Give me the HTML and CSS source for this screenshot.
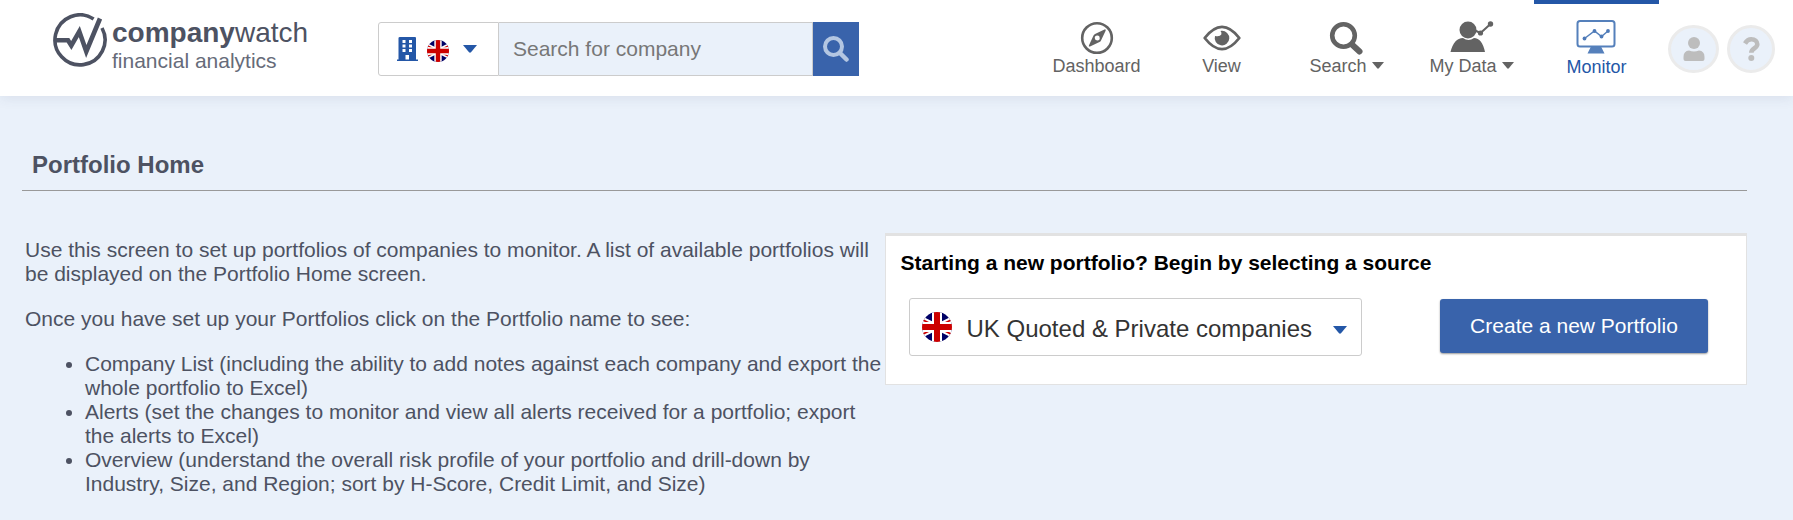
FILE: index.html
```html
<!DOCTYPE html>
<html lang="en">
<head>
<meta charset="utf-8">
<meta name="viewport" content="width=device-width, initial-scale=1">
<title>Portfolio Home</title>
<link rel="stylesheet" href="styles.css">
</head>
<body>
<svg class="defs" width="0" height="0" aria-hidden="true">
  <defs>
    <clipPath id="disc"><circle cx="15" cy="15" r="15"/></clipPath>
    <symbol id="flag" viewBox="0 0 30 30">
      <g clip-path="url(#disc)">
        <rect width="30" height="30" fill="#006"/>
        <path d="M-15 0 45 30M-15 30 45 0" stroke="#fff" stroke-width="6"/>
        <path d="M-15 0 45 30M-15 30 45 0" stroke="#c00" stroke-width="2"/>
        <path d="M15 0V30M0 15H30" stroke="#fff" stroke-width="10"/>
        <path d="M15 0V30M0 15H30" stroke="#c00" stroke-width="6"/>
      </g>
    </symbol>
    <symbol id="caret" viewBox="0 0 14 8"><path d="M0 0H14L8 7.3Q7 8.2 6 7.3Z" fill="currentColor"/></symbol>
  </defs>
</svg>

<header class="topbar">
  <a class="logo" href="#">
    <svg class="logo-mark" viewBox="0 0 56 56" aria-hidden="true">
      <path d="M41.600 5.900A25 25 0 1 0 50 15" fill="none" stroke="#4d5262" stroke-width="3.600"/>
      <path d="M3 27.300H16L19.300 32.500L27.300 18.500L34.300 38.500L48 5.500" fill="none" stroke="#4d5262" stroke-width="4.600"/>
    </svg>
    <span class="logo-text">
      <span class="logo-name"><b>company</b>watch</span>
      <span class="logo-tag">financial analytics</span>
    </span>
  </a>

  <form class="search">
    <button class="country" type="button" aria-label="Company search country">
      <svg class="building" viewBox="0 0 21 24" aria-hidden="true">
        <path fill="#2457a7" fill-rule="evenodd" d="M3 0H18Q19 0 19 1V22.500H21V24H0V22.500H1.500V1Q1.500 0 3 0ZM5.500 3V6H8.500V3ZM12 3V6H15V3ZM5.500 7.500V10.500H8.500V7.500ZM12 7.500V10.500H15V7.500ZM5.500 12V15H8.500V12ZM12 12V15H15V12ZM8.500 18V22.500H12V18Z"/>
      </svg>
      <svg class="flag-small" aria-hidden="true"><use href="#flag"/></svg>
      <svg class="caret" aria-hidden="true"><use href="#caret"/></svg>
    </button>
    <input class="search-input" type="text" placeholder="Search for company" aria-label="Search for company">
    <button class="search-button" type="submit" aria-label="Search">
      <svg class="search-icon" viewBox="0 0 26 26" fill="none" stroke="currentColor" aria-hidden="true">
        <circle cx="10.500" cy="10.500" r="8.500" stroke-width="4"/><path d="M17 17L23.500 23.500" stroke-width="4.500" stroke-linecap="round"/>
      </svg>
    </button>
  </form>

  <nav class="nav">
    <a class="nav-item" href="#">
      <svg class="nav-icon" viewBox="0 0 44 34" aria-hidden="true">
        <circle cx="22" cy="17" r="14.800" fill="none" stroke="#636363" stroke-width="2.600"/>
        <path fill="#636363" fill-rule="evenodd" d="M30.500 8.500Q31 9 30.500 10L26 19.500Q25.500 20.500 24.500 21L15 25.500Q13.200 26 14 24.200L18.500 14.500Q19 13.500 20 13L29.500 8.500Q30.200 8.200 30.500 8.500ZM22.200 14.500A2.500 2.500 0 1 0 22.300 19.500A2.500 2.500 0 1 0 22.200 14.500Z"/>
      </svg>
      <span>Dashboard</span>
    </a>
    <a class="nav-item" href="#">
      <svg class="nav-icon" viewBox="0 0 44 34" aria-hidden="true">
        <path d="M4.700 17Q22-5.200 39.300 17Q22 39.200 4.700 17Z" fill="none" stroke="#636363" stroke-width="2.800" stroke-linejoin="round"/>
        <path d="M21.500 9.800A7.300 7.300 0 1 1 15 15Q20 16 21.300 13.500Q22 11.800 20.500 10Z" fill="#636363"/>
      </svg>
      <span>View</span>
    </a>
    <a class="nav-item" href="#">
      <svg class="nav-icon" viewBox="0 0 44 34" fill="none" stroke="#636363" aria-hidden="true">
        <circle cx="18.500" cy="14.500" r="11.300" stroke-width="4.600"/><path d="M27.500 24L34.500 30.500" stroke-width="6" stroke-linecap="round"/>
      </svg>
      <span>Search <svg class="nav-caret" aria-hidden="true"><use href="#caret"/></svg></span>
    </a>
    <a class="nav-item" href="#">
      <svg class="nav-icon" viewBox="0 0 44 34" aria-hidden="true">
        <path d="M.5 31Q4 17 13 17Q18.500 21 24 17Q32 17 35 31Z" fill="#636363"/>
        <circle cx="18" cy="9" r="8.500" fill="#636363"/>
        <path d="M25 9.500L30.500 12L40.500 3" fill="none" stroke="#636363" stroke-width="2"/>
        <circle cx="30.500" cy="12" r="2.600" fill="#636363"/><circle cx="40.500" cy="3" r="2.700" fill="#636363"/>
      </svg>
      <span>My Data <svg class="nav-caret" aria-hidden="true"><use href="#caret"/></svg></span>
    </a>
    <a class="nav-item active" href="#" aria-current="page">
      <svg class="nav-icon" viewBox="0 0 44 34" aria-hidden="true">
        <rect x="2.500" y="1" width="37" height="25.500" rx="2.500" fill="none" stroke="#5580bb" stroke-width="2"/>
        <path d="M16 26.500H26L29.500 33.500H12.500Z" fill="#5580bb"/>
        <path d="M9.500 18.500L19.500 11L26.500 16.500L33 11" fill="none" stroke="#5580bb" stroke-width="1.500"/>
        <g fill="#4d79b7"><circle cx="9.500" cy="18.500" r="1.900"/><circle cx="19.500" cy="11" r="1.900"/><circle cx="26.500" cy="16.500" r="1.900"/><circle cx="33" cy="11" r="1.900"/></g>
      </svg>
      <span>Monitor</span>
    </a>
  </nav>

  <div class="account">
    <button class="round user" type="button" aria-label="Account">
      <svg class="round-icon" viewBox="0 0 22 24" fill="#bdbdbd" aria-hidden="true"><circle cx="11" cy="6" r="6"/><path d="M6 13.500Q11 15.500 16 13.500Q21.500 14 21.500 20V22Q21.500 24 19.500 24H2.500Q.5 24 .5 22V20Q.5 14 6 13.500Z"/></svg>
    </button>
    <button class="round" type="button" aria-label="Help">
      <svg class="round-icon" viewBox="0 0 22 24" aria-hidden="true"><path d="M5 6.500Q7.500 2.300 11.300 2.300C15 2.300 17.300 4.500 17.300 7.300C17.300 11.500 11.300 11 11.300 15.800" fill="none" stroke="#bdbdbd" stroke-width="4.600"/><circle cx="11.300" cy="21" r="3" fill="#bdbdbd"/></svg>
    </button>
  </div>
</header>

<main class="page">
  <h1 class="title">Portfolio Home</h1>
  <div class="columns">
    <section class="intro">
      <p>Use this screen to set up portfolios of companies to monitor. A list of available portfolios will be displayed on the Portfolio Home screen.</p>
      <p>Once you have set up your Portfolios click on the Portfolio name to see:</p>
      <ul>
        <li>Company List (including the ability to add notes against each company and export the whole portfolio to Excel)</li>
        <li>Alerts (set the changes to monitor and view all alerts received for a portfolio; export the alerts to Excel)</li>
        <li>Overview (understand the overall risk profile of your portfolio and drill-down by Industry, Size, and Region; sort by H-Score, Credit Limit, and Size)</li>
      </ul>
    </section>
    <section class="card">
      <h2 class="card-title"><label for="source">Starting a new portfolio? Begin by selecting a source</label></h2>
      <div class="card-row">
        <div class="source">
          <svg class="flag-large" aria-hidden="true"><use href="#flag"/></svg>
          <select id="source" class="source-select"><option>UK Quoted &amp; Private companies</option></select>
          <svg class="caret source-caret" aria-hidden="true"><use href="#caret"/></svg>
        </div>
        <button class="create" type="button">Create a new Portfolio</button>
      </div>
    </section>
  </div>
</main>
</body>
</html>
```

FILE: styles.css
```css
* {
  box-sizing: border-box;
}

body {
  margin: 0;
  min-height: 100vh;
  background: #eaf1fa;
  color: #4d5262;
  font: 21px/24px "Liberation Sans", Arial, sans-serif;
}

button,
input,
select {
  font: inherit;
  margin: 0;
}

svg {
  display: block;
  flex: none;
}

.defs {
  position: absolute;
}

.topbar {
  display: flex;
  height: 96px;
  padding: 0 18px 0 52px;
  background: #fff;
  box-shadow: 0 2px 12px rgba(60, 70, 110, 0.1);
}

.logo {
  display: flex;
  width: 326px;
  flex: none;
  padding-top: 13px;
  color: #4d5262;
  text-decoration: none;
}

.logo-mark {
  width: 56px;
  height: 56px;
}

.logo-text {
  display: flex;
  flex-direction: column;
  padding: 4px 0 0 4px;
}

.logo-name {
  font-size: 28px;
  line-height: 32px;
}

.logo-tag {
  font-size: 21px;
  line-height: 24px;
  color: #666b79;
}

.search {
  display: flex;
  width: 481px;
  height: 54px;
  margin-top: 22px;
}

.country {
  display: flex;
  align-items: center;
  width: 121px;
  padding: 0 0 0 18px;
  border: 1px solid #ccc;
  border-radius: 3px 0 0 3px;
  background: #fff;
  color: #2457a7;
}

.building {
  width: 21px;
  height: 24px;
}

.flag-small {
  width: 22px;
  height: 22px;
  margin: 4px 14px 0 9px;
}

.caret {
  width: 14px;
  height: 8px;
}

.search-input {
  flex: 1;
  min-width: 0;
  padding: 0 14px;
  border: 1px solid #ccc;
  border-left: 0;
  border-radius: 0;
  background: #eaf1fa;
  color: #4d5262;
}

.search-input::placeholder {
  color: #777;
  opacity: 1;
}

.search-button {
  display: flex;
  align-items: center;
  justify-content: center;
  width: 46px;
  padding: 0;
  border: 0;
  background: #3963ab;
  color: #b3c6e2;
}

.search-icon {
  width: 26px;
  height: 26px;
}

.nav {
  display: flex;
  margin-left: auto;
}

.nav-item {
  display: flex;
  flex-direction: column;
  align-items: center;
  width: 125px;
  padding-top: 21px;
  color: #636363;
  font-size: 18px;
  line-height: 22px;
  text-decoration: none;
}

.nav-item.active {
  gap: 2px;
  padding-top: 16px;
  border-top: 4px solid #2457a7;
  color: #2457a7;
}

.nav-icon {
  width: 44px;
  height: 34px;
}

.nav-caret {
  display: inline-block;
  width: 12px;
  height: 7px;
  vertical-align: 3px;
}

.account {
  display: flex;
  gap: 8px;
  padding: 25px 0 0 9px;
}

.round {
  display: flex;
  align-items: center;
  justify-content: center;
  width: 48px;
  height: 48px;
  padding: 0;
  border: 3px solid #ebebeb;
  border-radius: 50%;
  background: #eaf1fa;
}

.round.user {
  width: 51px;
}

.round-icon {
  width: 22px;
  height: 24px;
}

.page {
  padding: 56px 46px 24px 22px;
}

.title {
  margin: 0;
  padding: 0 10px 12px;
  border-bottom: 1px solid #999;
  font-size: 24px;
  line-height: 26px;
}

.columns {
  display: grid;
  grid-template-columns: 1fr 1fr;
  align-items: start;
  margin-top: 42px;
}

.intro {
  padding: 5px 0 0 3px;
}

.intro p,
.intro ul {
  margin: 0 0 21px;
}

.intro ul {
  padding-left: 60px;
}

.card {
  padding: 15px 38px 28px 15px;
  border: 1px solid #e2e2e2;
  border-top-width: 3px;
  background: #fff;
}

.card-title {
  margin: 0 0 23px;
  color: #000;
  font-size: 21px;
  line-height: 24px;
}

.card-row {
  display: flex;
  align-items: flex-start;
  justify-content: space-between;
  padding-left: 8px;
}

.source {
  position: relative;
  display: flex;
  align-items: center;
  width: 453px;
  height: 58px;
  border: 1px solid #ccc;
  border-radius: 3px;
  color: #2457a7;
}

.flag-large {
  position: absolute;
  left: 12px;
  width: 30px;
  height: 30px;
  pointer-events: none;
}

.source-select {
  width: 100%;
  height: 100%;
  padding: 4px 40px 0 57px;
  border: 0;
  background: transparent;
  appearance: none;
  color: #333;
  font-size: 24px;
}

.source-caret {
  position: absolute;
  right: 14px;
  top: 27px;
  pointer-events: none;
}

.create {
  width: 268px;
  height: 54px;
  margin-top: 1px;
  padding: 0;
  border: 0;
  border-radius: 3px;
  background: #3963ab;
  box-shadow: 0 1px 2px rgba(0, 0, 0, 0.4);
  color: #fff;
}
```
